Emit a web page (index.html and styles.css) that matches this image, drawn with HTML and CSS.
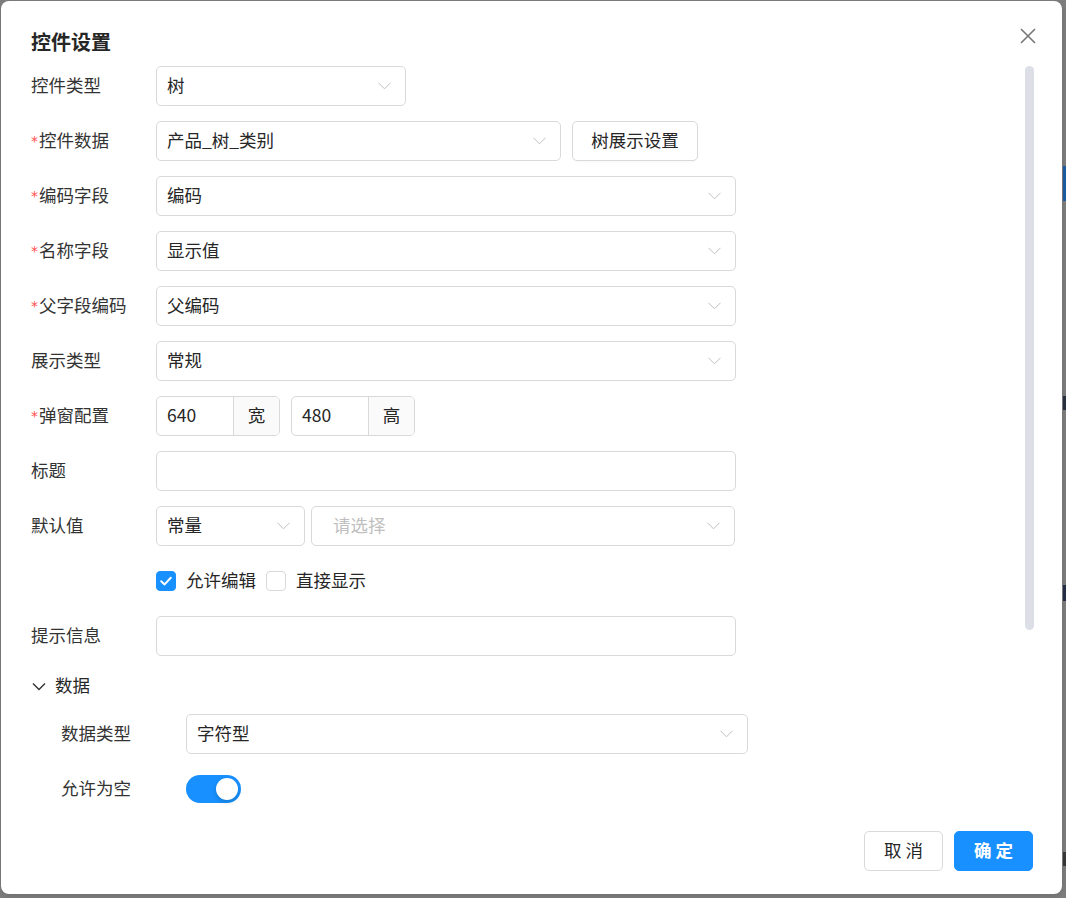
FILE: index.html
```html
<!DOCTYPE html>
<html lang="zh-CN">
<head>
<meta charset="utf-8">
<title>控件设置</title>
<link rel="stylesheet" href="styles.css">
</head>
<body>
<div class="backdrop">
  <div class="bg-bits">
    <span class="bit bit-blue"></span>
    <span class="bit bit-dark1"></span>
    <span class="bit bit-dark2"></span>
    <span class="bit bit-dark3"></span>
  </div>
  <div class="modal">
    <div class="modal-header">
      <div class="modal-title">控件设置</div>
      <span class="close">
        <svg width="18" height="18" viewBox="0 0 18 18"><path d="M2 2 L16 16 M16 2 L2 16" stroke="#777" stroke-width="1.6" fill="none"/></svg>
      </span>
    </div>
    <div class="modal-body">
      <div class="scroll-thumb"></div>
      <div class="form">
        <div class="row">
          <div class="label">控件类型</div>
          <div class="select w250"><span class="val">树</span><svg class="arrow" width="13" height="8" viewBox="0 0 13 8"><path d="M0.5 0.8 L6.5 6.8 L12.5 0.8" stroke="#bfbfbf" stroke-width="1" fill="none"/></svg></div>
        </div>
        <div class="row">
          <div class="label"><span class="req">*</span>控件数据</div>
          <div class="select w405"><span class="val">产品_树_类别</span><svg class="arrow" width="13" height="8" viewBox="0 0 13 8"><path d="M0.5 0.8 L6.5 6.8 L12.5 0.8" stroke="#bfbfbf" stroke-width="1" fill="none"/></svg></div>
          <div class="btn btn-tree">树展示设置</div>
        </div>
        <div class="row">
          <div class="label"><span class="req">*</span>编码字段</div>
          <div class="select w580"><span class="val">编码</span><svg class="arrow" width="13" height="8" viewBox="0 0 13 8"><path d="M0.5 0.8 L6.5 6.8 L12.5 0.8" stroke="#bfbfbf" stroke-width="1" fill="none"/></svg></div>
        </div>
        <div class="row">
          <div class="label"><span class="req">*</span>名称字段</div>
          <div class="select w580"><span class="val">显示值</span><svg class="arrow" width="13" height="8" viewBox="0 0 13 8"><path d="M0.5 0.8 L6.5 6.8 L12.5 0.8" stroke="#bfbfbf" stroke-width="1" fill="none"/></svg></div>
        </div>
        <div class="row">
          <div class="label"><span class="req">*</span>父字段编码</div>
          <div class="select w580"><span class="val">父编码</span><svg class="arrow" width="13" height="8" viewBox="0 0 13 8"><path d="M0.5 0.8 L6.5 6.8 L12.5 0.8" stroke="#bfbfbf" stroke-width="1" fill="none"/></svg></div>
        </div>
        <div class="row">
          <div class="label">展示类型</div>
          <div class="select w580"><span class="val">常规</span><svg class="arrow" width="13" height="8" viewBox="0 0 13 8"><path d="M0.5 0.8 L6.5 6.8 L12.5 0.8" stroke="#bfbfbf" stroke-width="1" fill="none"/></svg></div>
        </div>
        <div class="row">
          <div class="label"><span class="req">*</span>弹窗配置</div>
          <div class="group">
            <span class="gval">640</span><span class="addon">宽</span>
          </div>
          <div class="group">
            <span class="gval">480</span><span class="addon">高</span>
          </div>
        </div>
        <div class="row">
          <div class="label">标题</div>
          <div class="input w580"></div>
        </div>
        <div class="row">
          <div class="label">默认值</div>
          <div class="select w149"><span class="val">常量</span><svg class="arrow" width="13" height="8" viewBox="0 0 13 8"><path d="M0.5 0.8 L6.5 6.8 L12.5 0.8" stroke="#bfbfbf" stroke-width="1" fill="none"/></svg></div>
          <div class="select w424 ph"><span class="val placeholder">请选择</span><svg class="arrow" width="13" height="8" viewBox="0 0 13 8"><path d="M0.5 0.8 L6.5 6.8 L12.5 0.8" stroke="#bfbfbf" stroke-width="1" fill="none"/></svg></div>
        </div>
        <div class="row">
          <div class="label"></div>
          <label class="check">
            <span class="box checked"><svg width="20" height="20" viewBox="0 0 20 20"><path d="M5.2 10.2 L8.6 13.4 L14.8 6.8" stroke="#fff" stroke-width="2" fill="none" stroke-linecap="round" stroke-linejoin="round"/></svg></span>
            <span class="ctext">允许编辑</span>
          </label>
          <label class="check">
            <span class="box"></span>
            <span class="ctext">直接显示</span>
          </label>
        </div>
        <div class="row">
          <div class="label">提示信息</div>
          <div class="input w580"></div>
        </div>
        <div class="collapse-head">
          <svg class="cchev" width="14" height="9" viewBox="0 0 14 9"><path d="M1 1.5 L7 7.5 L13 1.5" stroke="#333" stroke-width="1.4" fill="none"/></svg>
          <span class="ctext">数据</span>
        </div>
        <div class="sub">
          <div class="row">
            <div class="label">数据类型</div>
            <div class="select w562"><span class="val">字符型</span><svg class="arrow" width="13" height="8" viewBox="0 0 13 8"><path d="M0.5 0.8 L6.5 6.8 L12.5 0.8" stroke="#bfbfbf" stroke-width="1" fill="none"/></svg></div>
          </div>
          <div class="row">
            <div class="label">允许为空</div>
            <span class="switch"><span class="knob"></span></span>
          </div>
        </div>
      </div>
    </div>
    <div class="modal-footer">
      <div class="btn btn-cancel">取 消</div>
      <div class="btn btn-ok">确 定</div>
    </div>
  </div>
</div>
</body>
</html>
```

FILE: styles.css
```css
* { box-sizing: border-box; }
html, body { margin: 0; padding: 0; }
body {
  width: 1066px;
  height: 898px;
  overflow: hidden;
  background: #7f7f7f;
  font-family: "Noto Sans CJK SC", "Noto Sans", sans-serif;
  color: #333;
  font-size: 17.5px;
}
.backdrop {
  position: relative;
  width: 1066px;
  height: 898px;
  padding: 1px 0 0 1px;
}
.bg-bits { position: absolute; left: 1063px; top: 0; width: 3px; height: 898px; }
.bit { position: absolute; left: 0; width: 3px; }
.bit-blue { top: 166px; height: 35px; background: #1f5fa8; }
.bit-dark1 { top: 396px; height: 14px; background: #2a3340; }
.bit-dark2 { top: 585px; height: 16px; background: #26314a; }
.bit-dark3 { top: 852px; height: 14px; background: #3a3a3a; }

.modal {
  position: relative;
  width: 1061px;
  height: 893px;
  background: #fff;
  border-radius: 8px;
  display: flex;
  flex-direction: column;
  box-shadow: 0 2px 8px rgba(0,0,0,.15);
}
.modal-header {
  height: 65px;
  padding: 0 30px 0 30px;
  position: relative;
}
.modal-title {
  font-size: 20px;
  font-weight: bold;
  line-height: 30px;
  color: #262626;
  padding-top: 26px;
}
.close { position: absolute; right: 25px; top: 26px; display: block; width: 18px; height: 18px; }
.close svg { display: block; }

.modal-body {
  position: relative;
  flex: 1;
  padding: 0 30px;
  overflow: hidden;
}
.scroll-thumb {
  position: absolute;
  left: 1024px;
  top: 0;
  width: 9px;
  height: 564px;
  border-radius: 5px;
  background: #dcdfe6;
}
.form { display: flex; flex-direction: column; gap: 15px; }
.row {
  display: flex;
  align-items: center;
  height: 40px;
  gap: 11px;
}
.row .label {
  width: 114px;
  flex: none;
  color: #333;
  white-space: nowrap;
  padding-bottom: 4px;
}
.req {
  color: #ff4d4f;
  font-family: "DejaVu Sans", sans-serif;
  font-size: 14px;
  vertical-align: 1px;
  margin-right: 1px;
}
.select, .input, .group {
  height: 40px;
  border: 1px solid #d9d9d9;
  border-radius: 5px;
  background: #fff;
  flex: none;
}
.select {
  display: flex;
  align-items: center;
  justify-content: space-between;
  padding: 0 14px 0 10px;
}
.select .val { white-space: nowrap; color: #262626; padding-bottom: 4px; }
.select .placeholder { color: #bfbfbf; }
.select.ph { padding-left: 21px; }
.select .arrow { display: block; flex: none; }
.w149 { width: 149px; }
.w250 { width: 250px; }
.w405 { width: 405px; }
.w424 { width: 424px; margin-left: -5px; }
.w562 { width: 562px; }
.w580 { width: 580px; }

.group {
  width: 124px;
  display: flex;
  overflow: hidden;
}
.gval {
  flex: 1;
  display: flex;
  align-items: center;
  padding-left: 10px;
  padding-bottom: 3px;
  color: #262626;
}
.addon {
  width: 46px;
  flex: none;
  display: flex;
  align-items: center;
  justify-content: center;
  background: #fafafa;
  border-left: 1px solid #d9d9d9;
  color: #262626;
  padding-bottom: 4px;
}

.btn {
  height: 40px;
  border: 1px solid #d9d9d9;
  border-radius: 5px;
  background: #fff;
  display: flex;
  align-items: center;
  justify-content: center;
  color: #262626;
  flex: none;
  white-space: pre;
  padding-bottom: 4px;
}
.btn-tree { width: 126px; box-shadow: 0 2px 0 rgba(0,0,0,.015); }

.check { display: flex; align-items: center; gap: 10px; margin-right: -1px; }
.box {
  width: 20px;
  height: 20px;
  border: 1px solid #d9d9d9;
  border-radius: 4px;
  background: #fff;
  display: block;
  flex: none;
}
.box.checked { background: #1890ff; border-color: #1890ff; }
.box.checked svg { display: block; margin: -1px; }
.ctext { color: #262626; padding-bottom: 4px; }

.collapse-head {
  height: 30px;
  display: flex;
  align-items: center;
  gap: 9px;
  margin-bottom: -2px;
  padding-left: 1px;
  color: #262626;
}
.cchev { display: block; }
.sub { padding-left: 30px; display: flex; flex-direction: column; gap: 15px; }
.switch {
  width: 55px;
  height: 28px;
  border-radius: 14px;
  background: #1890ff;
  position: relative;
  display: block;
  flex: none;
}
.knob {
  position: absolute;
  right: 3px;
  top: 3px;
  width: 22px;
  height: 22px;
  border-radius: 50%;
  background: #fff;
  box-shadow: 0 2px 4px rgba(0,35,11,.2);
}

.modal-footer {
  height: 64px;
  display: flex;
  justify-content: flex-end;
  align-items: flex-start;
  gap: 11px;
  padding: 1px 29px 0 0;
}
.btn-cancel { width: 79px; }
.btn-ok {
  width: 79px;
  background: #1890ff;
  border-color: #1890ff;
  color: #fff;
  font-weight: bold;
}
```
